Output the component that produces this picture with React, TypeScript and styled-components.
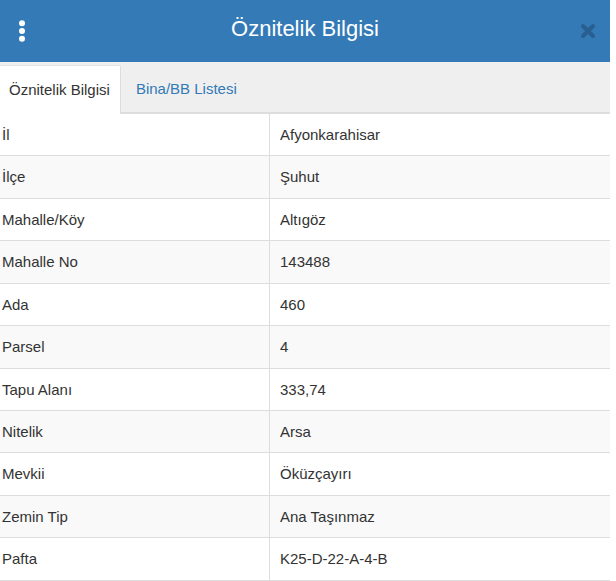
import React from "react";
import styled, { createGlobalStyle } from "styled-components";

const GlobalStyle = createGlobalStyle`
  html, body { margin: 0; padding: 0; background: #ffffff; }
  body { font-family: "Liberation Sans", Arial, sans-serif; color: #333333; }
  * { box-sizing: border-box; }
`;

const Panel = styled.div`
  width: 610px;
  background: #ffffff;
`;

const Header = styled.header`
  height: 62px;
  background: #337ab7;
  display: grid;
  grid-template-columns: 44px 1fr 44px;
  align-items: center;
`;

const IconButton = styled.div`
  display: flex;
  align-items: center;
  justify-content: center;
  height: 100%;
`;

const Title = styled.h1`
  margin: 0;
  padding-bottom: 4px;
  text-align: center;
  color: #ffffff;
  font-size: 22px;
  font-weight: 400;
  line-height: 1;
`;

const TabBar = styled.nav`
  height: 52px;
  background: #efefef;
  border-bottom: 2px solid #dddddd;
  display: flex;
  align-items: flex-end;
`;

const Tab = styled.div<{ $active?: boolean }>`
  height: ${(p) => (p.$active ? "49px" : "47px")};
  margin-bottom: ${(p) => (p.$active ? "-2px" : "0")};
  padding: ${(p) => (p.$active ? "0 10px 0 9px" : "0 15px 0 15px")};
  display: flex;
  align-items: center;
  font-size: 15px;
  line-height: 1.42857;
  background: ${(p) => (p.$active ? "#ffffff" : "transparent")};
  color: ${(p) => (p.$active ? "#333333" : "#337ab7")};
  border-top: 1px solid ${(p) => (p.$active ? "#e4e4e4" : "transparent")};
  border-right: 1px solid ${(p) => (p.$active ? "#dddddd" : "transparent")};
  border-top-right-radius: 2px;
`;

const Table = styled.div`
  display: flex;
  flex-direction: column;
`;

const Row = styled.div<{ $striped: boolean }>`
  display: grid;
  grid-template-columns: 269px 1fr;
  background: ${(p) => (p.$striped ? "#f9f9f9" : "#ffffff")};
  border-bottom: 1px solid #dddddd;
`;

const KeyCell = styled.div`
  padding: 10px 8px 10px 2px;
  font-size: 15px;
  line-height: 1.42857;
  color: #333333;
`;

const ValueCell = styled.div`
  padding: 10px 8px 10px 10px;
  font-size: 15px;
  line-height: 1.42857;
  color: #333333;
  border-left: 1px solid #dddddd;
`;

const KebabIcon = () => (
  <svg width="10" height="24" viewBox="0 0 10 24" aria-hidden="true">
    <circle cx="5" cy="4.3" r="3" fill="#ffffff" />
    <circle cx="5" cy="12" r="3" fill="#ffffff" />
    <circle cx="5" cy="19.7" r="3" fill="#ffffff" />
  </svg>
);

const CloseIcon = () => (
  <svg width="16" height="16" viewBox="0 0 16 16" aria-hidden="true">
    <path
      d="M3 3 L13 13 M13 3 L3 13"
      stroke="#285f90"
      strokeWidth="4"
      strokeLinecap="round"
      fill="none"
    />
  </svg>
);

const rows: [string, string][] = [
  ["İl", "Afyonkarahisar"],
  ["İlçe", "Şuhut"],
  ["Mahalle/Köy", "Altıgöz"],
  ["Mahalle No", "143488"],
  ["Ada", "460"],
  ["Parsel", "4"],
  ["Tapu Alanı", "333,74"],
  ["Nitelik", "Arsa"],
  ["Mevkii", "Öküzçayırı"],
  ["Zemin Tip", "Ana Taşınmaz"],
  ["Pafta", "K25-D-22-A-4-B"],
];

export default function App() {
  return (
    <>
      <GlobalStyle />
      <Panel>
        <Header>
          <IconButton>
            <KebabIcon />
          </IconButton>
          <Title>Öznitelik Bilgisi</Title>
          <IconButton>
            <CloseIcon />
          </IconButton>
        </Header>
        <TabBar>
          <Tab $active>Öznitelik Bilgisi</Tab>
          <Tab>Bina/BB Listesi</Tab>
        </TabBar>
        <Table>
          {rows.map(([k, v], i) => (
            <Row key={k} $striped={i % 2 === 1}>
              <KeyCell>{k}</KeyCell>
              <ValueCell>{v}</ValueCell>
            </Row>
          ))}
        </Table>
      </Panel>
    </>
  );
}
